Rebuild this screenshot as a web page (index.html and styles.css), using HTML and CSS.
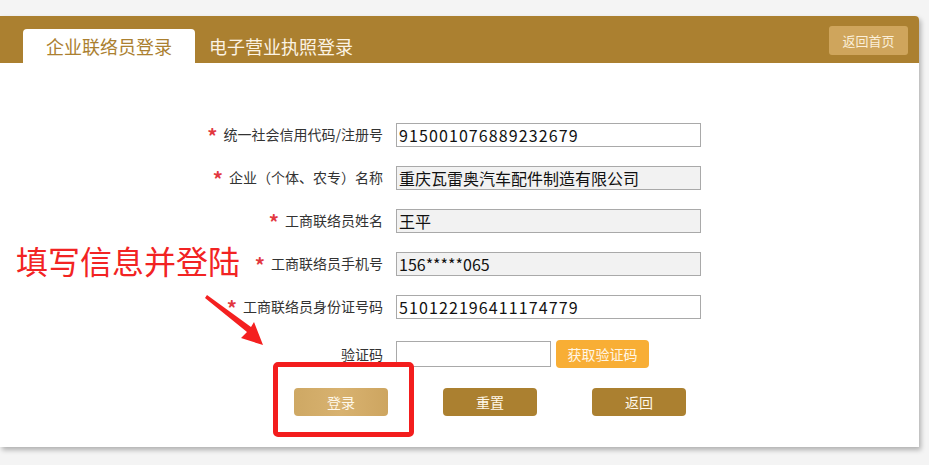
FILE: index.html
```html
<!DOCTYPE html>
<html lang="zh-CN">
<head>
  <meta charset="UTF-8">
  <meta name="viewport" content="width=device-width, initial-scale=1.0">
  <title>企业联络员登录</title>
  <link rel="stylesheet" href="styles.css">
</head>
<body>
  <div class="card">
    <div class="header">
      <div class="tabs">
        <div class="tab active">企业联络员登录</div>
        <div class="tab">电子营业执照登录</div>
      </div>
      <a class="home-btn" href="#">返回首页</a>
    </div>

    <form class="login-form">
      <div class="row">
        <label><span class="req">*</span>统一社会信用代码/注册号</label>
        <input type="text" class="num" value="915001076889232679">
      </div>
      <div class="row">
        <label><span class="req">*</span>企业（个体、农专）名称</label>
        <input type="text" class="readonly" value="重庆瓦雷奥汽车配件制造有限公司" readonly>
      </div>
      <div class="row">
        <label><span class="req">*</span>工商联络员姓名</label>
        <input type="text" class="readonly" value="王平" readonly>
      </div>
      <div class="row">
        <label><span class="req">*</span>工商联络员手机号</label>
        <input type="text" class="readonly" value="156*****065" readonly>
      </div>
      <div class="row">
        <label><span class="req">*</span>工商联络员身份证号码</label>
        <input type="text" class="num" value="510122196411174779">
      </div>
      <div class="row row-code">
        <label>验证码</label>
        <input type="text" class="code-input">
        <button type="button" class="code-btn">获取验证码</button>
      </div>
      <div class="actions">
        <button type="button" class="btn btn-login">登录</button>
        <button type="button" class="btn">重置</button>
        <button type="button" class="btn">返回</button>
      </div>
    </form>

    <!-- 标注 -->
    <div class="note-text">填写信息并登陆</div>
    <svg class="note-arrow" width="70" height="55" viewBox="0 0 70 55">
      <polygon points="2,0 46,32 49,27 58,50 36,43 42,37 0,3" fill="#f42020"/>
    </svg>
    <div class="note-box"></div>
  </div>
</body>
</html>
```

FILE: styles.css
```css
* {
  margin: 0;
  padding: 0;
  box-sizing: border-box;
}

body {
  font-family: "Noto Sans CJK SC", "Noto Sans", sans-serif;
  background-color: #f4f4f4;
  height: 465px;
  overflow: hidden;
}

.card {
  position: relative;
  width: 919px;
  height: 431px;
  margin-top: 16px;
  background-color: #fff;
  box-shadow: 2px 3px 5px rgba(0, 0, 0, 0.28);
  border-top-right-radius: 4px;
}

.header {
  display: flex;
  justify-content: space-between;
  align-items: flex-start;
  height: 47px;
  padding: 0 11px 0 23px;
  background-color: #ab8030;
  border-top-right-radius: 4px;
}

.tabs {
  display: flex;
  align-items: flex-end;
  height: 47px;
}

.tab {
  height: 34px;
  line-height: 34px;
  font-size: 18px;
  color: #fbf3e4;
  padding: 0 14px;
}

.tab.active {
  width: 172px;
  text-align: center;
  background-color: #fff;
  color: #ab8030;
  border-radius: 4px 4px 0 0;
}

.home-btn {
  margin-top: 10px;
  width: 79px;
  height: 29px;
  line-height: 29px;
  text-align: center;
  font-size: 13px;
  color: #fbefd8;
  background-color: #cfa55c;
  border-radius: 3px;
  text-decoration: none;
}

.login-form {
  padding-top: 60px;
}

.row {
  display: flex;
  align-items: center;
  height: 24px;
  margin-bottom: 19px;
}

.row label {
  width: 383px;
  text-align: right;
  font-size: 14px;
  color: #333;
  margin-right: 13px;
}

.req {
  color: #e2383f;
  font-size: 20px;
  font-weight: bold;
  vertical-align: -4px;
  margin-right: 6px;
}

.row input {
  width: 305px;
  height: 24px;
  border: 1px solid #a9a9a9;
  padding: 0 2px;
  font-family: "Noto Sans CJK SC", "Noto Sans", sans-serif;
  font-size: 16px;
  color: #111;
  background-color: #fff;
  outline: none;
}

.row input.num {
  letter-spacing: 1.1px;
}

.row input.readonly {
  background-color: #f2f2f2;
}

.row-code {
  height: 28px;
  margin-top: 21px;
  margin-bottom: 20px;
}

.row input.code-input {
  width: 155px;
  height: 26px;
}

.code-btn {
  margin-left: 5px;
  width: 93px;
  height: 28px;
  border: none;
  border-radius: 4px;
  background-color: #f8ae35;
  color: #fff6e6;
  font-family: "Noto Sans CJK SC", "Noto Sans", sans-serif;
  font-size: 14px;
}

.actions {
  display: flex;
  gap: 55px;
  padding-left: 294px;
}

.btn {
  width: 94px;
  height: 28px;
  border: none;
  border-radius: 4px;
  background-color: #ab8030;
  color: #fff8ea;
  font-family: "Noto Sans CJK SC", "Noto Sans", sans-serif;
  font-size: 14px;
}

.btn-login {
  background: linear-gradient(90deg, #cea864, #d8b270 50%, #cda560);
}

/* 标注 */
.note-text {
  position: absolute;
  left: 16px;
  top: 224px;
  font-size: 32px;
  line-height: 40px;
  color: #f22323;
}

.note-arrow {
  position: absolute;
  left: 205px;
  top: 279px;
}

.note-box {
  position: absolute;
  left: 273px;
  top: 346px;
  width: 141px;
  height: 75px;
  border: 5px solid #f31d1d;
  border-radius: 5px;
}
```
